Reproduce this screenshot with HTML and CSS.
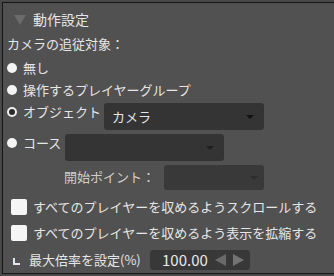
FILE: index.html
```html
<!DOCTYPE html>
<html lang="ja">
<head>
<meta charset="utf-8">
<link rel="stylesheet" href="styles.css">
</head>
<body>
<div class="panel">
  <div class="header"><span class="tri"></span><span class="title">動作設定</span></div>
  <div class="label">カメラの追従対象：</div>
  <div class="row r1"><span class="radio"></span><span class="txt">無し</span></div>
  <div class="row r2"><span class="radio"></span><span class="txt">操作するプレイヤーグループ</span></div>
  <div class="row sel-row r3">
    <span class="radio checked"></span><span class="txt lbl">オブジェクト</span>
    <div class="select s1"><span class="val">カメラ</span><span class="caret"></span></div>
  </div>
  <div class="row sel-row r4">
    <span class="radio"></span><span class="txt lbl">コース</span>
    <div class="select s2"><span class="caret"></span></div>
  </div>
  <div class="row r5">
    <span class="txt dim">開始ポイント：</span>
    <div class="select s3"><span class="caret"></span></div>
  </div>
  <div class="row cb cb1"><span class="box"></span><span class="txt">すべてのプレイヤーを収めるようスクロールする</span></div>
  <div class="row cb cb2"><span class="box"></span><span class="txt">すべてのプレイヤーを収めるよう表示を拡縮する</span></div>
  <div class="row last">
    <span class="corner"></span><span class="txt maxlbl">最大倍率を設定(%)</span>
    <div class="num"><span class="numval">100.00</span><span class="arr left"></span><span class="arr right"></span></div>
  </div>
</div>
</body>
</html>
```
FILE: styles.css
```css
html, body {
  margin: 0;
  padding: 0;
  background: #484848;
  width: 334px;
  height: 276px;
  overflow: hidden;
}
body {
  font-family: "Noto Sans CJK JP", "Noto Sans", sans-serif;
  font-size: 13px;
  color: #e6e6e6;
}
.panel {
  margin: 2px 0 0 2px;
  border-top: 1px solid #161616;
  border-left: 1px solid #161616;
  border-bottom: 1px solid #161616;
  background: #515151;
  height: 270px;
  padding-left: 4px;
  display: flex;
  flex-direction: column;
}
.header {
  height: 31px;
  display: flex;
  align-items: center;
}
.tri {
  width: 0;
  height: 0;
  border-left: 6px solid transparent;
  border-right: 6px solid transparent;
  border-top: 10px solid #6b6b6b;
  margin-left: 7px;
  margin-top: 2px;
}
.title {
  margin-left: 7px;
  font-size: 14px;
  line-height: 20px;
}
.label {
  height: 20px;
  line-height: 20px;
}
.row {
  display: flex;
  align-items: center;
}
.txt {
  line-height: 18px;
  white-space: nowrap;
}
.r1 { margin-top: 3px; height: 22px; }
.r2 { height: 22px; }
.radio {
  width: 10px;
  height: 10px;
  border-radius: 50%;
  background: #f4f4f4;
  margin-right: 6px;
  box-sizing: border-box;
  flex: none;
}
.radio.checked {
  background: #2a2a2a;
  border: 2.5px solid #f0f0f0;
}
.sel-row {
  align-items: flex-start;
  height: 27px;
}
.sel-row .radio { margin-top: 4px; }
.r3 { margin-top: 2px; }
.r4 { margin-top: 4px; }
.select {
  background: #343434;
  border-radius: 3px;
  display: flex;
  align-items: center;
  box-sizing: border-box;
}
.caret {
  width: 0;
  height: 0;
  border-left: 4px solid transparent;
  border-right: 4px solid transparent;
  border-top: 4px solid #111;
  margin-left: auto;
}
.s1 {
  margin-left: 3px;
  width: 160px;
  height: 27px;
  padding: 0 10px 0 8px;
}
.val { line-height: 18px; margin-top: 1px; }
.s2 {
  margin-left: 4px;
  width: 159px;
  height: 27px;
  padding-right: 10px;
}
.s2 .caret { border-top-color: #1e1e1e; }
.r5 {
  margin-top: 4px;
  height: 25px;
}
.dim {
  color: #cfcfcf;
  margin-left: 57px;
  margin-top: -2px;
}
.s3 {
  margin-left: 9px;
  width: 100px;
  height: 25px;
  padding-right: 6px;
  background: #393939;
}
.s3 .caret { border-top-color: #2c2c2c; }
.cb { height: 22px; }
.cb1 { margin-top: 6px; }
.cb2 { margin-top: 4px; }
.box {
  width: 16px;
  height: 16px;
  background: #f6f6f6;
  border-radius: 2px;
  margin-left: 4px;
  margin-right: 6px;
  flex: none;
}
.last {
  margin-top: 6px;
  height: 20px;
}
.corner {
  width: 7px;
  height: 7px;
  box-sizing: border-box;
  border-left: 2px solid #dfe6f2;
  border-bottom: 2px solid #dfe6f2;
  margin-left: 6px;
  margin-top: 3px;
  flex: none;
}
.maxlbl {
  margin-left: 9px;
  width: 121px;
}
.num {
  width: 100px;
  height: 20px;
  background: #383838;
  border-radius: 3px;
  display: flex;
  align-items: center;
  padding-left: 12px;
  box-sizing: border-box;
}
.numval {
  font-size: 15px;
  line-height: 20px;
  color: #e8e8e8;
  width: 53px;
}
.arr {
  width: 0;
  height: 0;
  border-top: 6.5px solid transparent;
  border-bottom: 6.5px solid transparent;
}
.arr.left {
  border-right: 11px solid #6a6a6a;
}
.arr.right {
  border-left: 11px solid #747474;
  margin-left: 7px;
}
```
